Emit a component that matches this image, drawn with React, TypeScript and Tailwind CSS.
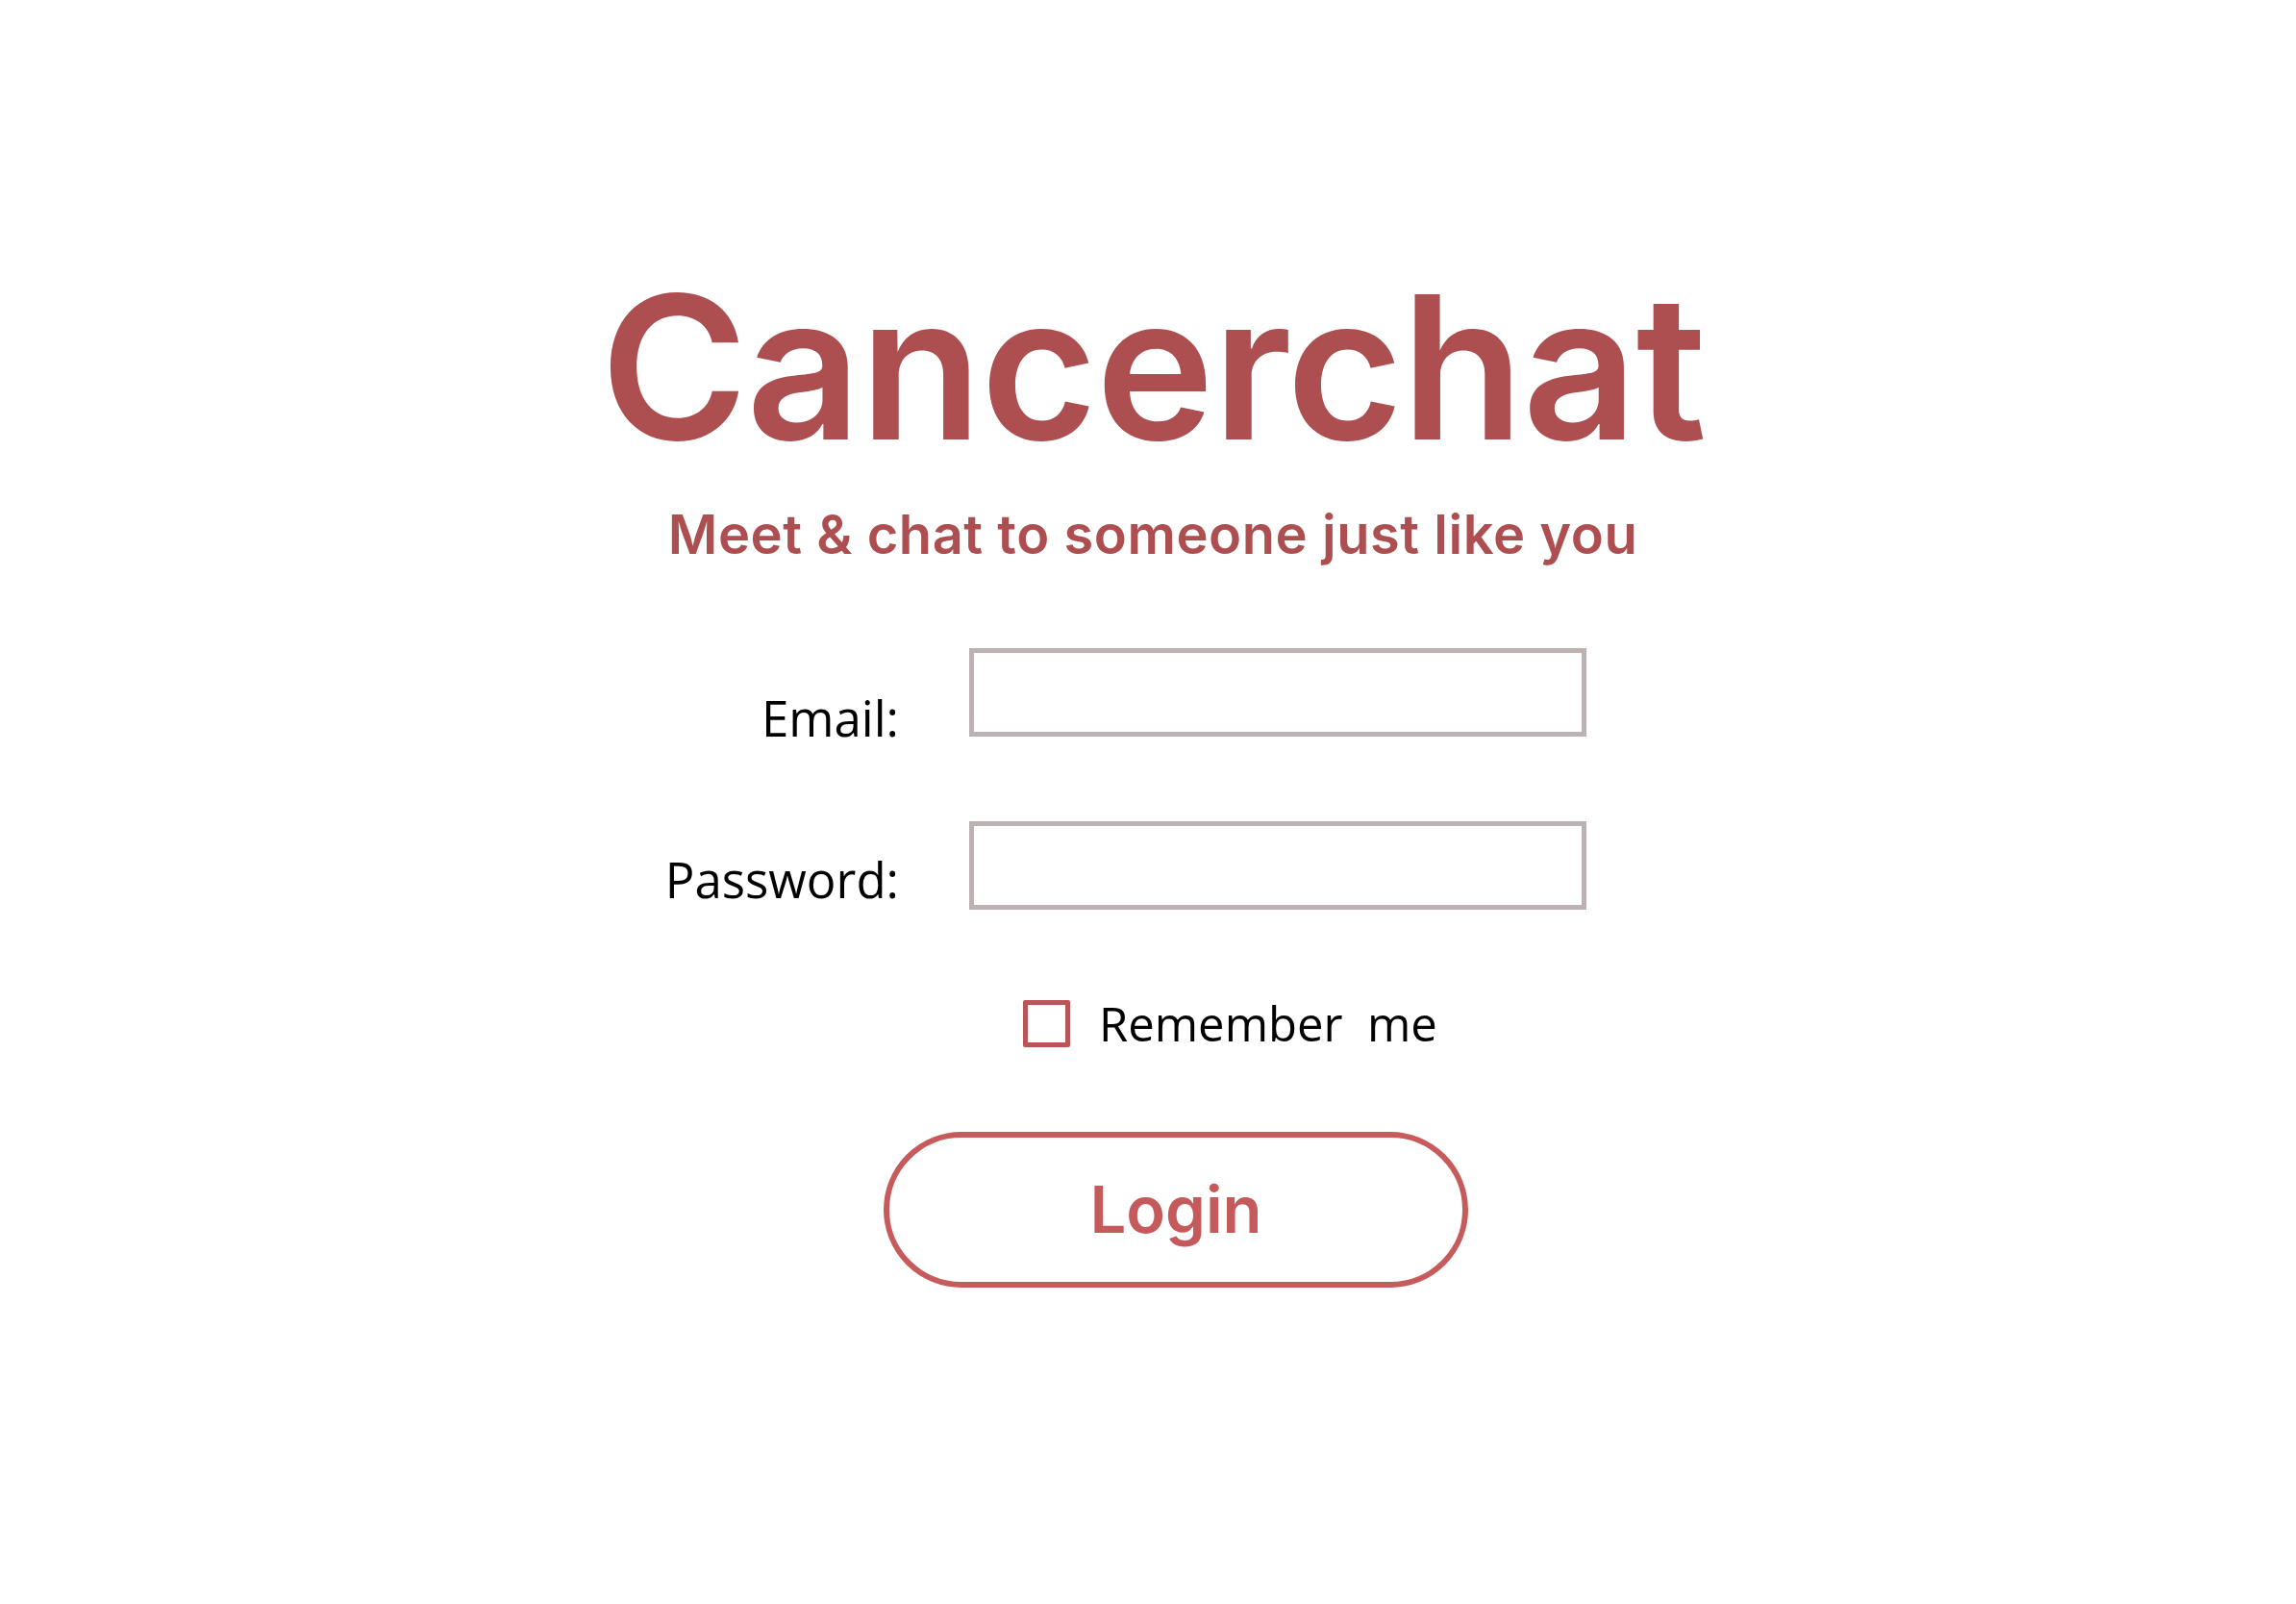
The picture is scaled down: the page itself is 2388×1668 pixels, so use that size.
import React from 'react';

export default function App() {
  const [email, setEmail] = React.useState('');
  const [password, setPassword] = React.useState('');
  const [remember, setRemember] = React.useState(false);

  return (
    <div className="min-h-[1668px] w-full bg-white font-['Open_Sans',sans-serif]">
      <div className="flex flex-col items-center pt-[277px]">
        <h1 className="ml-[10px] font-['Inter',sans-serif] text-[208px] font-semibold leading-none tracking-[-0.007em] text-[#ad4f50]">
          Cancerchat
        </h1>
        <p className="mt-[43px] ml-[10px] font-['Inter',sans-serif] text-[56px] font-semibold leading-none tracking-[0.01em] text-[#ad4f50]">
          Meet &amp; chat to someone just like you
        </p>

        <form
          onSubmit={(e) => e.preventDefault()}
          className="mt-[90px] mr-[103px] grid grid-cols-[300px_642px] gap-x-[73px]"
        >
          <label
            htmlFor="email"
            className="flex items-end justify-end text-[51px] leading-none text-black"
          >
            <span className="translate-y-[6px]">Email:</span>
          </label>
          <input
            id="email"
            type="email"
            value={email}
            onChange={(e) => setEmail(e.target.value)}
            className="h-[92px] border-[5px] border-[#bcb1b3] bg-white px-4 text-[40px] outline-none"
          />

          <label
            htmlFor="password"
            className="mt-[88px] flex items-end justify-end text-[51px] leading-none text-black"
          >
            <span className="translate-y-[-6px]">Password:</span>
          </label>
          <input
            id="password"
            type="password"
            value={password}
            onChange={(e) => setPassword(e.target.value)}
            className="mt-[88px] h-[92px] border-[5px] border-[#bcb1b3] bg-white px-4 text-[40px] outline-none"
          />

          <div />
          <label className="mt-[94px] flex items-center gap-[30px] pl-[56px] text-[49px] leading-none text-black">
            <input
              type="checkbox"
              checked={remember}
              onChange={(e) => setRemember(e.target.checked)}
              className="h-[49px] w-[49px] appearance-none rounded-[2px] border-[5px] border-[#b85556] bg-white"
            />
            <span>Remember&nbsp; me</span>
          </label>
        </form>

        <button
          type="button"
          className="mt-[88px] ml-[58px] flex h-[162px] w-[608px] items-center justify-center rounded-full border-[6px] border-[#c75a5b] bg-white font-['Inter',sans-serif] text-[67px] font-semibold text-[#c45a5b]"
        >
          Login
        </button>
      </div>
    </div>
  );
}
